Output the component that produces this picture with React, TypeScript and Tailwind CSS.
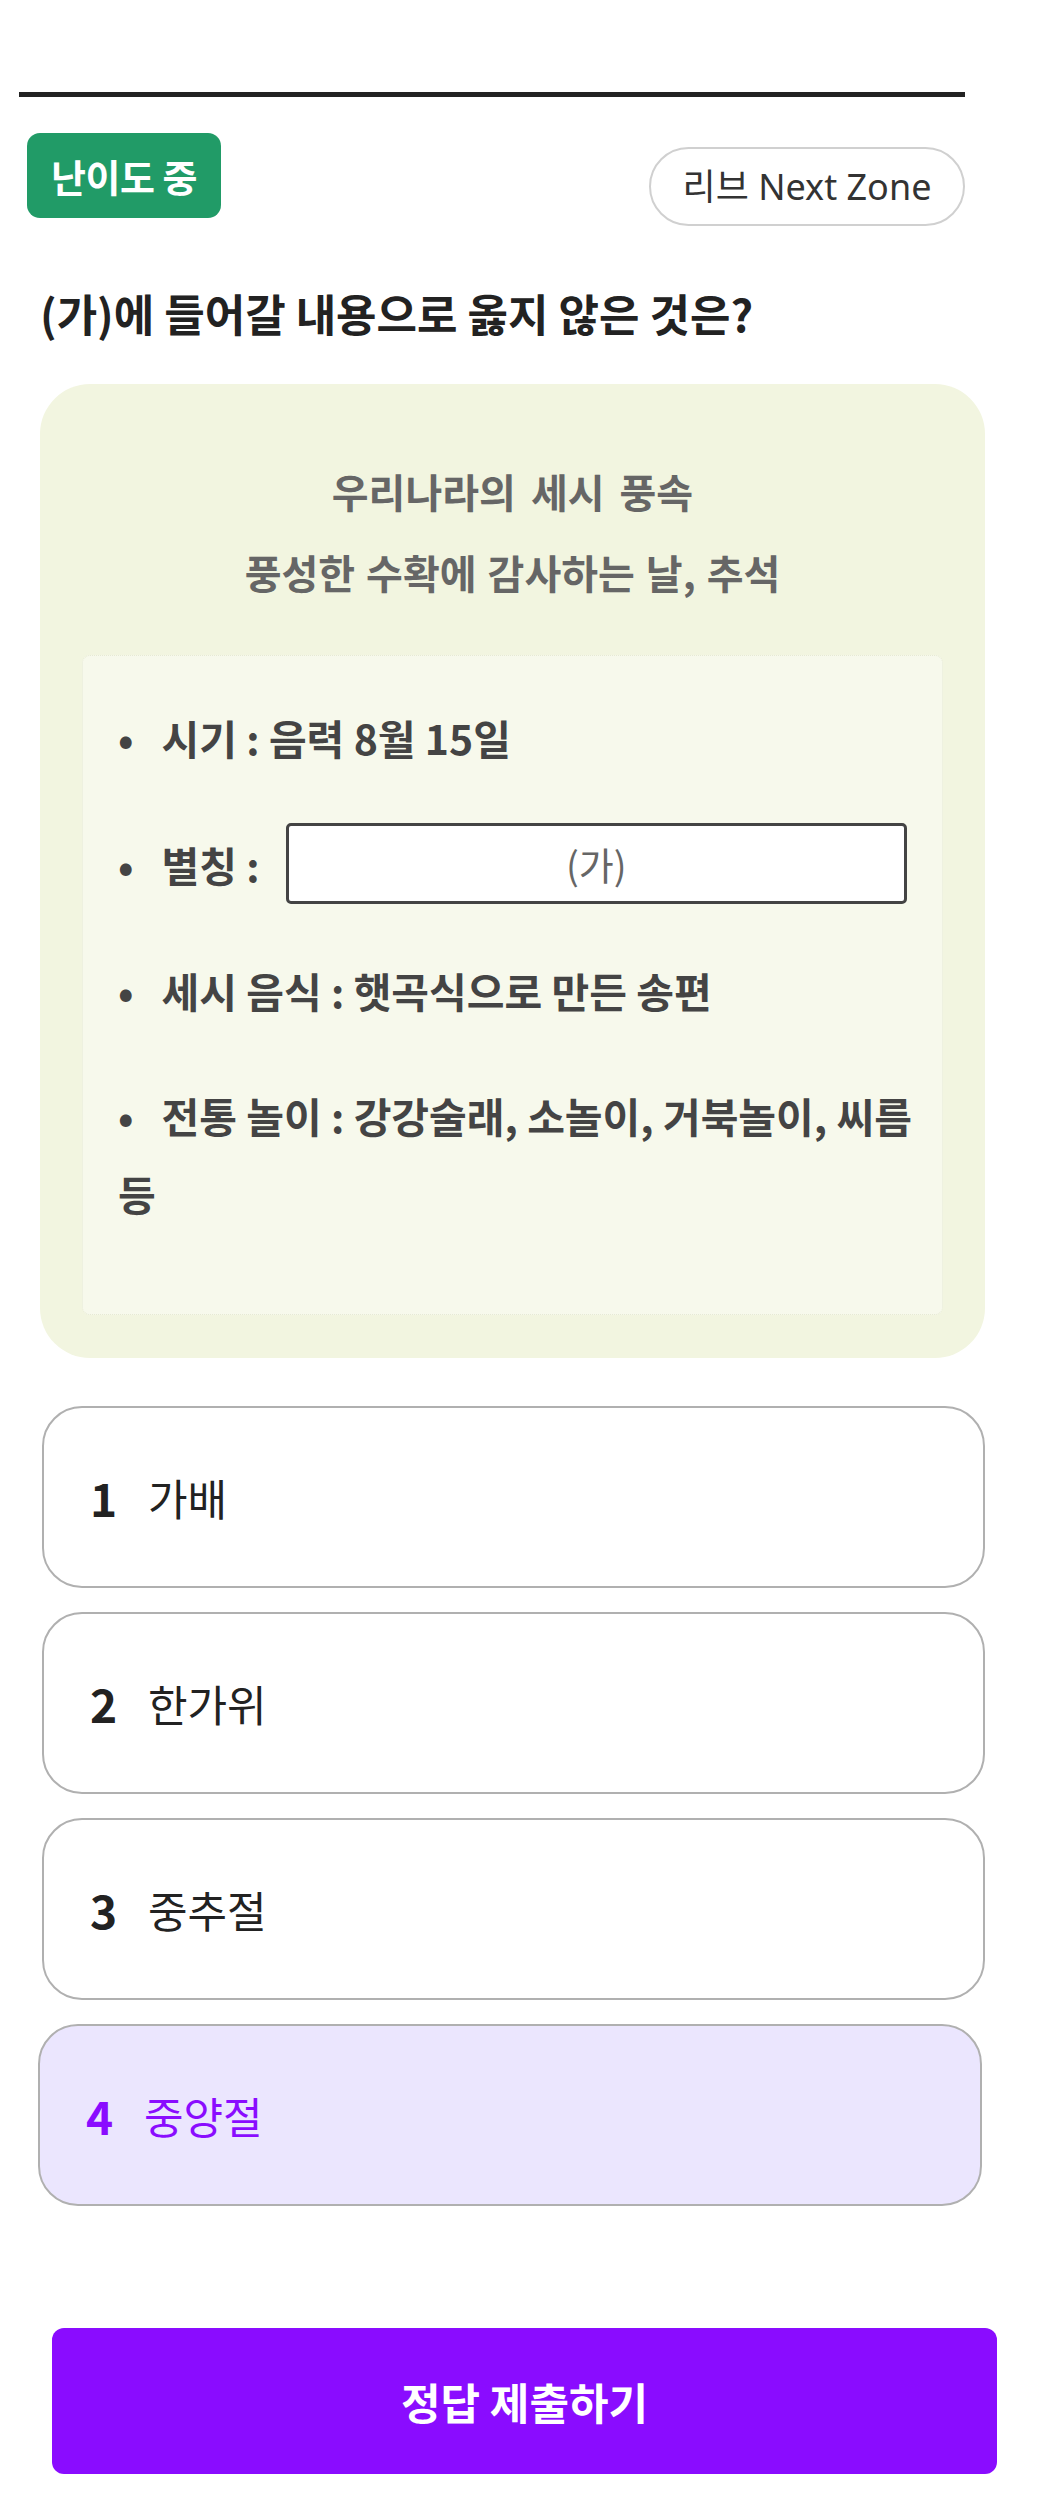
import React from "react";

const choices = [
  { no: 1, label: "가배" },
  { no: 2, label: "한가위" },
  { no: 3, label: "중추절" },
  { no: 4, label: "중양절" },
];

export default function App() {
  const selected = 4;

  return (
    <div className="w-[1056px] min-h-[2500px] bg-white font-['Noto_Sans_CJK_KR',sans-serif] text-[#222]">
      {/* 상단 진행 바 */}
      <div className="pt-[92px] pl-[19px]">
        <div className="w-[946px] h-[5px] bg-[#222]" />
      </div>

      <div className="flex items-start justify-between pl-[27px] w-[965px] mt-[36px]">
        <span className="flex items-center justify-center w-[194px] h-[85px] rounded-[13px] bg-[#219b67] text-white text-[38px] font-bold tracking-[-0.5px]">
          난이도 중
        </span>
        <button className="mt-[14px] flex items-center justify-center w-[316px] h-[79px] rounded-full border-2 border-[#d0d0d0] bg-white text-[36px] text-[#333] font-['Noto_Sans','Noto_Sans_CJK_KR',sans-serif]">
          리브 Next Zone
        </button>
      </div>

      <h2 className="mt-[62px] pl-[40px] text-[44px] leading-[50px] font-bold text-[#222]">
        (가)에 들어갈 내용으로 옳지 않은 것은?
      </h2>

      {/* 지문 카드 */}
      <div className="mt-[46px] ml-[40px] w-[945px] rounded-[50px] bg-[#f2f5e0] px-[42px] pt-[67px] pb-[43px]">
        <div className="text-center text-[40px] leading-[81px] font-bold text-[#666]">
          <p className="[word-spacing:6px]">우리나라의 세시 풍속</p>
          <p className="[word-spacing:2px]">풍성한 수확에 감사하는 날, 추석</p>
        </div>

        <div className="mt-[42px] rounded-[8px] border border-dotted border-[#e6e9d4] bg-[#f7f9ec] pl-[35px] pr-[35px] pt-[42px] pb-[82px]">
          <ul className="flex flex-col gap-[47px] text-[41px] leading-[78px] font-bold text-[#444]">
            <li>
              <span className="mr-[28px]">•</span>시기 : 음력 8월 15일
            </li>
            <li className="flex items-center">
              <span className="mr-[28px]">•</span>
              <span>별칭 :</span>
              <span className="ml-[26px] flex-1 h-[81px] flex items-center justify-center rounded-[5px] border-[3px] border-[#444] bg-white text-[38px] font-normal text-[#666]">
                (가)
              </span>
            </li>
            <li>
              <span className="mr-[28px]">•</span>세시 음식 : 햇곡식으로 만든 송편
            </li>
            <li className="whitespace-nowrap">
              <span className="mr-[28px]">•</span>전통 놀이 : 강강술래, 소놀이, 거북놀이, 씨름
              <br />등
            </li>
          </ul>
        </div>
      </div>

      {/* 선택지 */}
      <div className="mt-[48px] flex flex-col gap-[24px]">
        {choices.map((c) => {
          const on = c.no === selected;
          return (
            <div
              key={c.no}
              className={
                on
                  ? "ml-[38px] w-[944px] h-[182px] flex items-center pl-[46px] rounded-[40px] border-2 border-[#b0b0b0] bg-[#ebe6fe] text-[#8a0cff]"
                  : "ml-[42px] w-[943px] h-[182px] flex items-center pl-[46px] rounded-[40px] border-2 border-[#b0b0b0] bg-white text-[#222]"
              }
            >
              <span className="w-[58px] text-[46px] font-bold">{c.no}</span>
              <span className="text-[43px] font-normal">{c.label}</span>
            </div>
          );
        })}
      </div>

      <div className="mt-[122px] pl-[52px]">
        <button className="w-[945px] h-[146px] rounded-[12px] bg-[#8a0cff] text-white text-[43px] font-bold">
          정답 제출하기
        </button>
      </div>
    </div>
  );
}
